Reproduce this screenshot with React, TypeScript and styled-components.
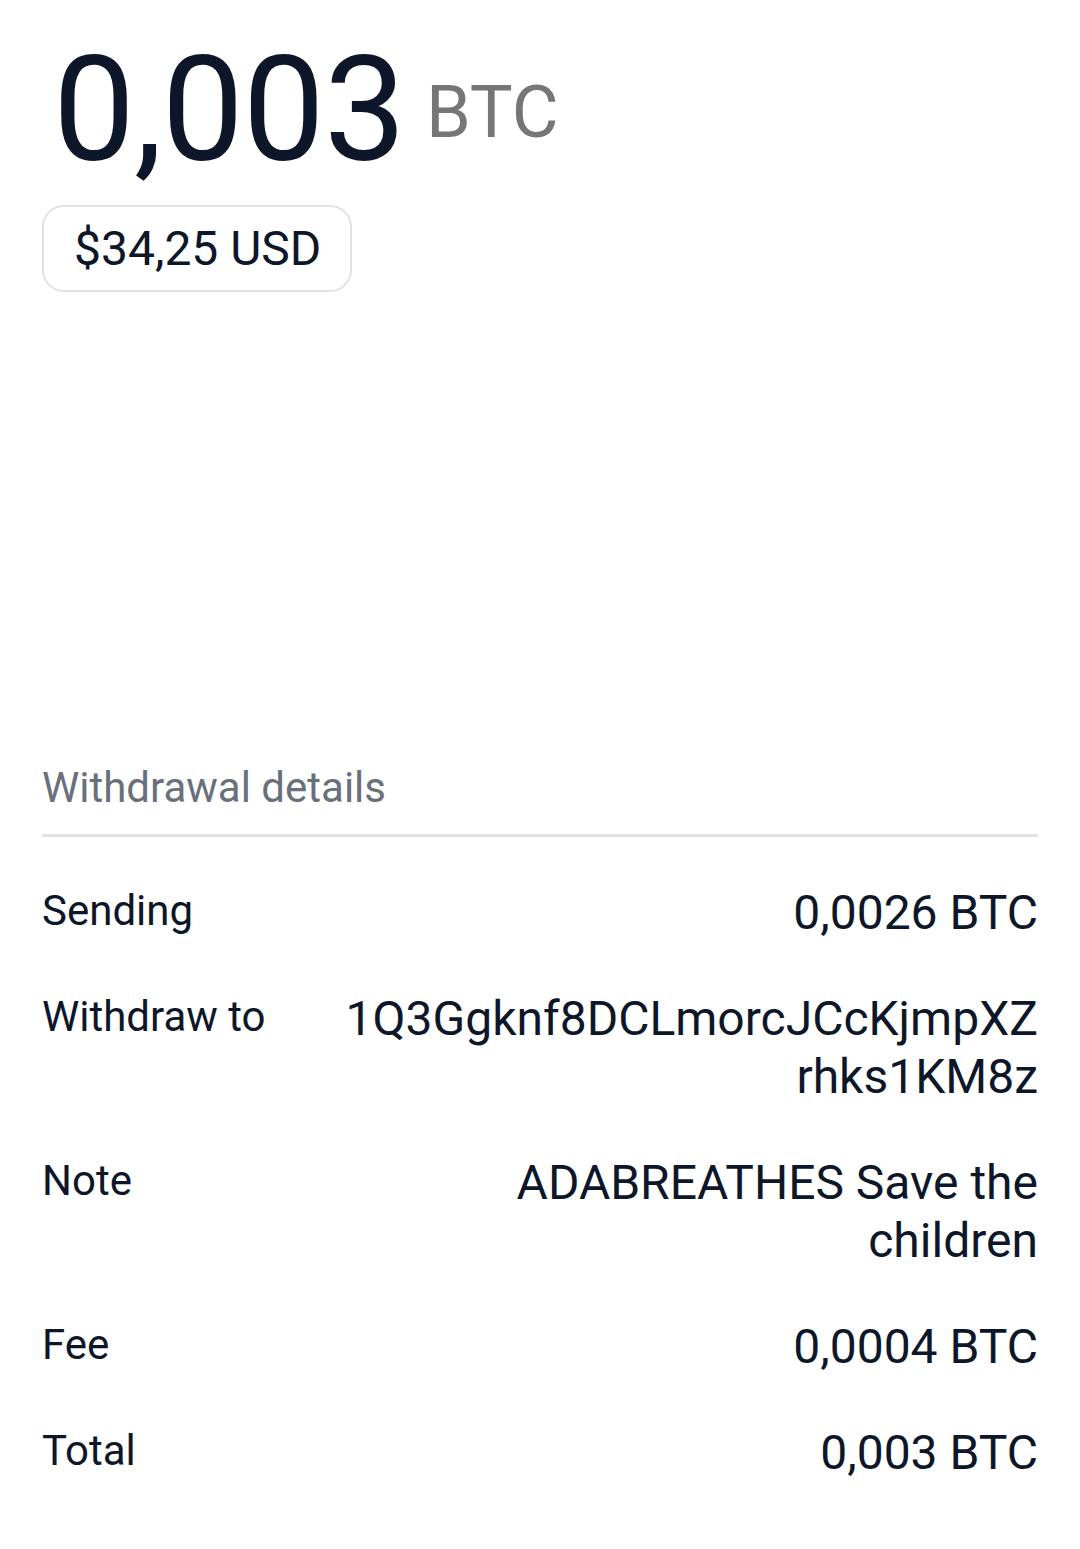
import styled, { createGlobalStyle } from 'styled-components';

const GlobalStyle = createGlobalStyle`
  html, body {
    margin: 0;
    padding: 0;
    background: #ffffff;
  }
  body {
    font-family: Roboto, 'Liberation Sans', sans-serif;
    -webkit-font-smoothing: antialiased;
  }
`;

const colors = {
  ink: '#0e1729',
  muted: '#767676',
  subtle: '#69707b',
  line: '#e2e2e2',
};

const Screen = styled.div`
  width: 1080px;
  min-height: 1549px;
  box-sizing: border-box;
  padding: 38px 42px 0;
`;

const AmountRow = styled.div`
  display: flex;
  align-items: flex-start;
`;

const BigAmount = styled.span`
  margin-left: 11px;
  font-size: 146px;
  line-height: 1;
  color: ${colors.ink};
  letter-spacing: -1px;
`;

const Unit = styled.span`
  margin-top: 39px;
  margin-left: 21px;
  font-size: 72px;
  line-height: 1;
  color: ${colors.muted};
`;

const FiatPill = styled.div`
  display: inline-flex;
  align-items: center;
  box-sizing: border-box;
  height: 87px;
  margin-top: 21px;
  padding: 0 29px 0 30px;
  border: 2px solid ${colors.line};
  border-radius: 22px;
  font-size: 48px;
  color: ${colors.ink};
`;

const Details = styled.section`
  margin-top: 475px;
`;

const SectionTitle = styled.h2`
  margin: 0;
  padding-bottom: 25px;
  border-bottom: 3px solid ${colors.line};
  font-size: 42px;
  font-weight: 400;
  line-height: 1;
  color: ${colors.subtle};
`;

const Rows = styled.div`
  display: flex;
  flex-direction: column;
  gap: 48px;
  padding-top: 47px;
`;

const Row = styled.div`
  display: flex;
  justify-content: space-between;
  align-items: flex-start;
  gap: 40px;
`;

const Label = styled.span`
  flex-shrink: 0;
  font-size: 42px;
  line-height: 54px;
  color: ${colors.ink};
`;

const Value = styled.span<{ $breakAll?: boolean }>`
  max-width: 696px;
  text-align: right;
  font-size: 48px;
  line-height: 58px;
  color: ${colors.ink};
  word-break: ${props => (props.$breakAll ? 'break-all' : 'normal')};
`;

const details: { label: string; value: string; breakAll?: boolean }[] = [
  { label: 'Sending', value: '0,0026 BTC' },
  { label: 'Withdraw to', value: '1Q3Ggknf8DCLmorcJCcKjmpXZrhks1KM8z', breakAll: true },
  { label: 'Note', value: 'ADABREATHES Save the children' },
  { label: 'Fee', value: '0,0004 BTC' },
  { label: 'Total', value: '0,003 BTC' },
];

export default function App() {
  return (
    <>
      <GlobalStyle />
      <Screen>
        <AmountRow>
          <BigAmount>0,003</BigAmount>
          <Unit>BTC</Unit>
        </AmountRow>
        <FiatPill>$34,25 USD</FiatPill>

        <Details>
          <SectionTitle>Withdrawal details</SectionTitle>
          <Rows>
            {details.map(item => (
              <Row key={item.label}>
                <Label>{item.label}</Label>
                <Value $breakAll={item.breakAll}>{item.value}</Value>
              </Row>
            ))}
          </Rows>
        </Details>
      </Screen>
    </>
  );
}
